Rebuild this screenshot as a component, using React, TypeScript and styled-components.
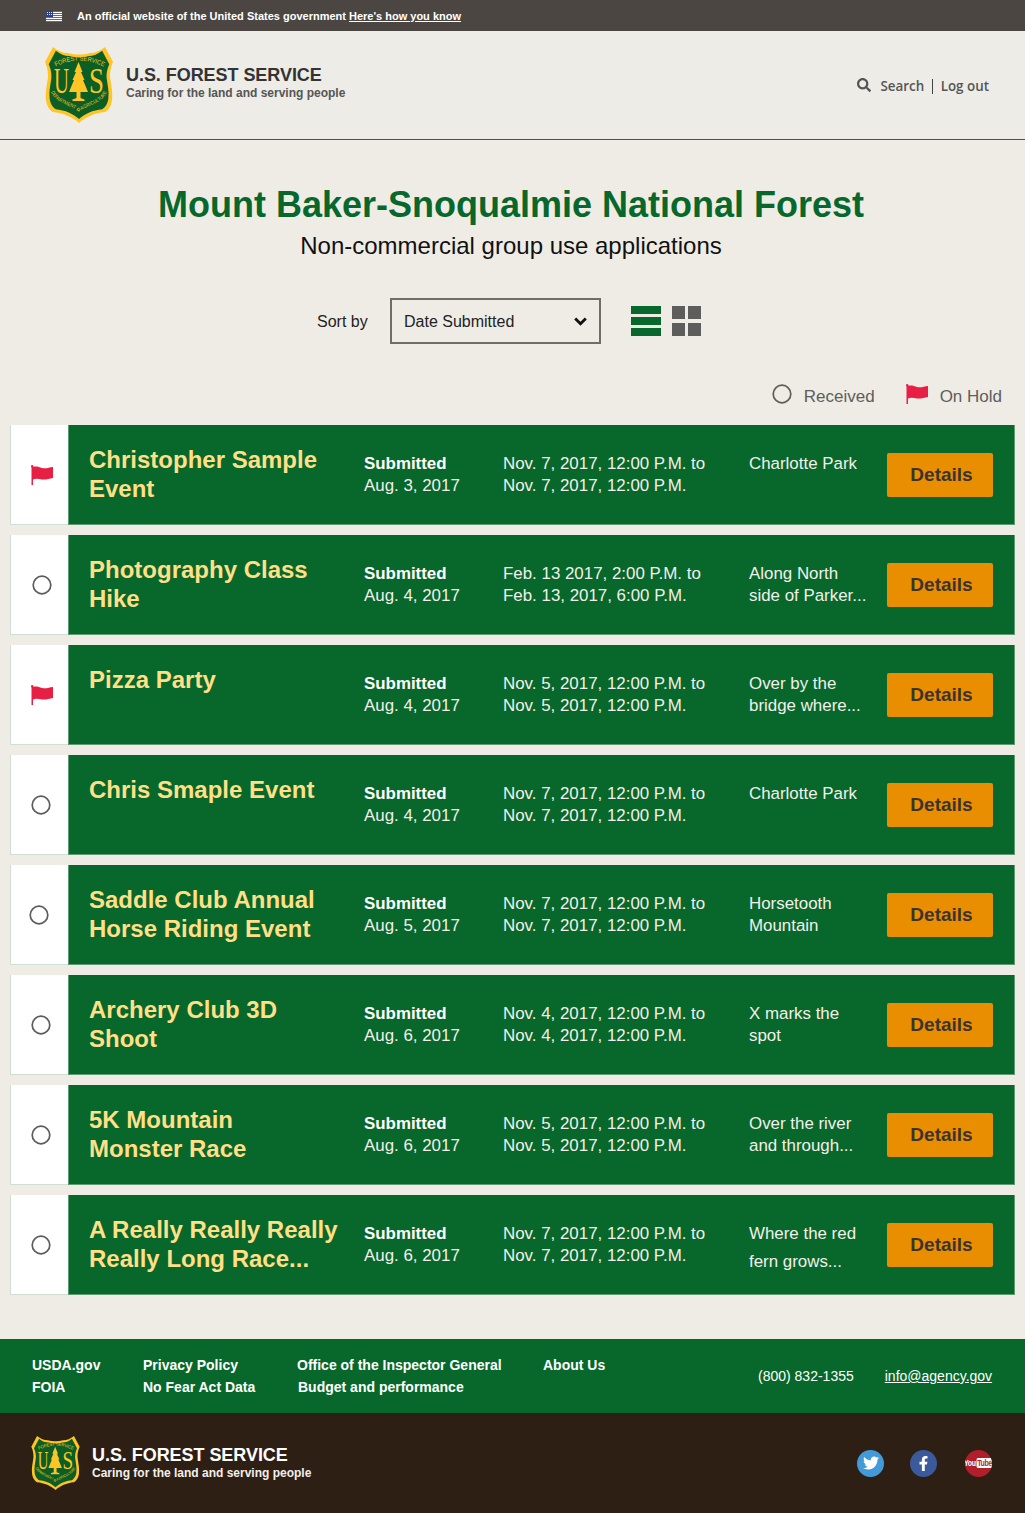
import React from "react";
import styled, { createGlobalStyle } from "styled-components";
import { FaTwitter, FaFacebookF, FaSearch } from "react-icons/fa";

const Global = createGlobalStyle`
  html, body { margin: 0; padding: 0; background: #efece6; }
  body { font-family: "Liberation Sans", Arial, sans-serif; }
  * { box-sizing: border-box; }
  a { color: inherit; }
`;

const Page = styled.div`width: 1025px; height: 1513px; display: flex; flex-direction: column; background: #efece6;`;
const Banner = styled.div`height: 31px; background: #4c4642; color: #fff; display: flex; align-items: center; padding: 1px 0 0 46px; font-size: 11px; font-weight: 700;`;
const BannerText = styled.span`margin-left: 15px; a { text-decoration: underline; }`;
const Header = styled.header`height: 109px; background: #eeece6; border-bottom: 1px solid #1f6b3a; display: flex; align-items: flex-start; justify-content: space-between; padding: 16px 36px 0 45px;`;
const Brand = styled.div<{ $gap: number }>`display: flex; align-items: center; gap: ${p => p.$gap}px;`;
const BrandText = styled.div<{ $up?: number }>`display: flex; flex-direction: column; margin-bottom: ${p => p.$up ?? 0}px;`;
const BrandTitle = styled.div<{ $light?: boolean }>`font-size: 18px; line-height: 20px; font-weight: 700; letter-spacing: -.05px; color: ${p => p.$light ? "#fff" : "#333"};`;
const BrandSub = styled.div<{ $light?: boolean }>`font-size: 12px; line-height: 16px; font-weight: 700; color: ${p => p.$light ? "#f2efe9" : "#555"};`;
const HeaderLinks = styled.nav`display: flex; align-items: center; margin-top: 30px; font-family: "Open Sans", sans-serif; font-size: 13.4px; font-weight: 600; color: #555; svg { margin-right: 9px; margin-top: -3px; }`;
const Divider = styled.span`width: 1px; height: 15px; background: #444; margin: 0 8px 0 7.5px;`;

const Main = styled.main`flex: 1; display: flex; flex-direction: column; padding-top: 44px;`;
const Title = styled.h1`margin: 0; text-align: center; font-size: 36px; line-height: 42px; font-weight: 700; color: #08672a; padding-right: 3px;`;
const Subtitle = styled.p`margin: 0; text-align: center; font-size: 24px; line-height: 40px; color: #111; padding-right: 3px;`;
const SortBar = styled.div`display: flex; align-items: center; margin: 32px 0 0 317px; height: 46px;`;
const SortLabel = styled.label`font-size: 16px; color: #222; width: 73px; padding-top: 1px;`;
const SelectWrap = styled.div`position: relative; width: 211px; height: 46px;`;
const Select = styled.select`appearance: none; width: 100%; height: 100%; border: 2px solid #6e6d68; border-radius: 0; background: transparent; padding: 0 0 0 12px; font: 16px "Liberation Sans", Arial, sans-serif; color: #222;`;
const Chevron = styled.svg`position: absolute; right: 14px; top: 19px; pointer-events: none;`;
const ViewIcons = styled.div`display: flex; gap: 11px; margin-left: 30px;`;
const Legend = styled.div`display: flex; justify-content: flex-end; align-items: center; margin-top: 37px; padding-right: 23px; height: 32px; font-size: 17px; color: #5d5d5d;`;
const LegendItem = styled.span<{ $gap: number; $mr?: number }>`display: flex; align-items: center; gap: ${p => p.$gap}px; margin-right: ${p => p.$mr ?? 0}px; svg { margin-bottom: 6px; }`;
const List = styled.div`display: flex; flex-direction: column; gap: 10px; margin: 12px 10px 0;`;
const Row = styled.article`display: grid; grid-template-columns: 58px 1fr; height: 100px;`;
const Status = styled.div<{ $shift: number }>`background: #fff; border: 1px solid #cfe0d3; border-right: 0; border-top: 0; display: flex; align-items: center; padding-left: ${p => p.$shift}px;`;
const Content = styled.div`background: #08672a; border-bottom: 1px solid #5e9a72; border-right: 1px solid #5e9a72; display: grid; grid-template-columns: 275px 139px 246px 138px 106px; padding: 20px 0 0 20px; border-left: 1px solid #5e9a72;`;
const EventName = styled.h2`margin: 0; font-size: 24px; line-height: 29px; font-weight: 700; color: #ffdf87; white-space: pre-line;`;
const Cell = styled.div<{ $lh?: number }>`font-size: 16.9px; line-height: ${p => p.$lh ?? 21.5}px; color: #f2f0ea; padding-top: ${p => p.$lh ? 5 : 8}px; white-space: pre-line;`;
const Strong = styled.strong`display: block; color: #fff;`;
const DetailsButton = styled.button`height: 44px; width: 106px; margin-top: 8px; padding: 0 0 0 3px; background: #e88e00; border: 0; border-radius: 2px; font: 700 19px "Liberation Sans", Arial, sans-serif; color: #3b3330;`;

const FooterLinks = styled.div`height: 74px; background: #08672a; color: #fff; display: flex; align-items: flex-start; padding: 15px 0 0 32px; font-size: 14px; font-weight: 700; line-height: 22px;`;
const LinkCol = styled.div<{ $w: number }>`width: ${p => p.$w}px; white-space: nowrap;`;
const LinkLine = styled.div<{ $indent?: number }>`padding-left: ${p => p.$indent ?? 0}px;`;
const Contact = styled.div`font-weight: 400; display: flex; gap: 31px; margin: 11px 0 0 91px; font-size: 14px; a { text-decoration: underline; }`;
const FooterBottom = styled.div`height: 100px; background: #2e1f14; display: flex; align-items: center; justify-content: space-between; padding: 0 33px 0 31px;`;
const Socials = styled.div`display: flex; gap: 26px; margin-bottom: 0;`;
const Social = styled.span<{ $bg: string; $ml?: number }>`width: 27px; height: 27px; flex: none; border-radius: 50%; overflow: hidden; background: ${p => p.$bg}; color: #fff; display: flex; align-items: center; justify-content: center; margin-left: ${p => p.$ml ?? 0}px;`;
const YouTube = styled.span`font: 700 9px "Liberation Sans", sans-serif; letter-spacing: -.5px; display: flex; align-items: center; flex: none; transform: scaleX(.78);`;
const Tube = styled.span`background: #fff; color: #b11f2a; border-radius: 2px; padding: 0 1px; margin-left: 1px;`;

const SHIELD = "M8 0 C13 4 18 6 23 6 C30 8 38 8 45 6 C50 6 55 4 60 0 L68 15 C65 22 65 26 65 30 C66 38 68 45 67 53 C66 60 63 63 60 65 C50 66 40 70 34 76 C28 70 18 66 8 65 C5 63 2 60 1 53 C0 45 2 38 3 30 C3 26 3 22 0 15 Z";

const Shield = ({ w, h, id }: { w: number; h: number; id: string }) => (
  <svg width={w} height={h} viewBox="0 0 68 76" aria-label="Forest Service shield">
    <path d={SHIELD} fill="#ffc425" />
    <path d={SHIELD} fill="#0b5e24" transform="translate(34 37) scale(.89 .9) translate(-34 -37)" />
    <defs>
      <path id={`${id}-top`} d="M8 21 Q34 6 61 21" />
      <path id={`${id}-bottom`} d="M5 42 C9 57 25 57 34 65 C43 57 59 57 63 42" />
    </defs>
    <text fontFamily="Liberation Sans, sans-serif" fontSize="6.400" fill="#ffc425">
      <textPath href={`#${id}-top`} startOffset="3" textLength="50" lengthAdjust="spacingAndGlyphs">FOREST SERVICE</textPath>
    </text>
    <text fontFamily="Liberation Sans, sans-serif" fontSize="5" fill="#ffc425">
      <textPath href={`#${id}-bottom`} startOffset="3" textLength="70" lengthAdjust="spacingAndGlyphs">DEPARTMENT OF AGRICULTURE</textPath>
    </text>
    <text x="9" y="46" fontFamily="Liberation Serif, serif" fontSize="36" textLength="15" lengthAdjust="spacingAndGlyphs" fill="#ffc425">U</text>
    <text x="44" y="46" fontFamily="Liberation Serif, serif" fontSize="36" textLength="15" lengthAdjust="spacingAndGlyphs" fill="#ffc425">S</text>
    <path d="M33.500 15 L37.500 25 L36 25 L39.500 33 L38 33 L43 45 L35.500 45 L35.500 51 L39.500 52.500 L39.500 54 L27.500 54 L27.500 52.500 L31.500 51 L31.500 45 L24 45 L29 33 L27.500 33 L31 25 L29.500 25 Z" fill="#ffc425" />
  </svg>
);

const Flag = ({ w = 22, h = 20 }: { w?: number; h?: number }) => (
  <svg width={w} height={h} viewBox="0 0 22 20" aria-hidden="true">
    <rect x="0.500" y="1" width="1.500" height="19" fill="#e81f45" />
    <circle cx="1.200" cy="1.200" r="1.200" fill="#e81f45" />
    <path d="M2 2 C5 1 8 2 11 3 C15 4 18 2.500 22 2 L22 13 C18 13.500 15 15 11 14.500 C8 14 5 13 2 14.500 Z" fill="#e81f45" />
  </svg>
);
const Ring = ({ size = 20 }: { size?: number }) => (
  <svg width={size} height={size} viewBox="0 0 20 20" aria-hidden="true">
    <circle cx="10" cy="10" r="8.800" fill="none" stroke="#5d5d5d" strokeWidth="1.700" />
  </svg>
);

const rows = [
  { name: "Christopher Sample\nEvent", sub: "Aug. 3, 2017", d: "Nov. 7, 2017, 12:00 P.M. to\nNov. 7, 2017, 12:00 P.M.", loc: "Charlotte Park", flag: true, shift: 20 },
  { name: "Photography Class\nHike", sub: "Aug. 4, 2017", d: "Feb. 13 2017, 2:00 P.M. to\nFeb. 13, 2017, 6:00 P.M.", loc: "Along North\nside of Parker...", shift: 21 },
  { name: "Pizza Party", sub: "Aug. 4, 2017", d: "Nov. 5, 2017, 12:00 P.M. to\nNov. 5, 2017, 12:00 P.M.", loc: "Over by the\nbridge where...", flag: true, shift: 20 },
  { name: "Chris Smaple Event", sub: "Aug. 4, 2017", d: "Nov. 7, 2017, 12:00 P.M. to\nNov. 7, 2017, 12:00 P.M.", loc: "Charlotte Park", shift: 20 },
  { name: "Saddle Club Annual\nHorse Riding Event", sub: "Aug. 5, 2017", d: "Nov. 7, 2017, 12:00 P.M. to\nNov. 7, 2017, 12:00 P.M.", loc: "Horsetooth\nMountain", shift: 18 },
  { name: "Archery Club 3D\nShoot", sub: "Aug. 6, 2017", d: "Nov. 4, 2017, 12:00 P.M. to\nNov. 4, 2017, 12:00 P.M.", loc: "X marks the\nspot", shift: 20 },
  { name: "5K Mountain\nMonster Race", sub: "Aug. 6, 2017", d: "Nov. 5, 2017, 12:00 P.M. to\nNov. 5, 2017, 12:00 P.M.", loc: "Over the river\nand through...", shift: 20 },
  { name: "A Really Really Really\nReally Long Race...", sub: "Aug. 6, 2017", d: "Nov. 7, 2017, 12:00 P.M. to\nNov. 7, 2017, 12:00 P.M.", loc: "Where the red\nfern grows...", shift: 20, locLh: 28 },
];

export default function App() {
  return (
    <Page>
      <Global />
      <Banner>
        <svg width="16" height="11" viewBox="0 0 16 11" aria-hidden="true">
          <rect width="16" height="11" fill="#fff" />
          {[0, 2, 4, 6, 8, 10].map(y => <rect key={y} y={y} width="16" height="1" fill="#e0393e" />)}
          <rect width="7" height="6" fill="#2b3f8c" />
          {[1, 3, 5].map(x => [1, 3].map(y => <rect key={`${x}-${y}`} x={x} y={y} width="1" height="1" fill="#dfe3f2" />))}
        </svg>
        <BannerText>An official website of the United States government <a href="#">Here's how you know</a></BannerText>
      </Banner>
      <Header>
        <Brand $gap={13}>
          <Shield w={68} h={76} id="top" />
          <BrandText $up={5}>
            <BrandTitle>U.S. FOREST SERVICE</BrandTitle>
            <BrandSub>Caring for the land and serving people</BrandSub>
          </BrandText>
        </Brand>
        <HeaderLinks>
          <FaSearch size={14} />
          <span>Search</span>
          <Divider />
          <span>Log out</span>
        </HeaderLinks>
      </Header>
      <Main>
        <Title>Mount Baker-Snoqualmie National Forest</Title>
        <Subtitle>Non-commercial group use applications</Subtitle>
        <SortBar>
          <SortLabel>Sort by</SortLabel>
          <SelectWrap>
            <Select defaultValue="Date Submitted"><option>Date Submitted</option></Select>
            <Chevron width="13" height="9" viewBox="0 0 13 9" aria-hidden="true">
              <path d="M1.200 1.500 L6.500 6.800 L11.800 1.500" fill="none" stroke="#111" strokeWidth="2.800" />
            </Chevron>
          </SelectWrap>
          <ViewIcons>
            <svg width="30" height="30" viewBox="0 0 30 30" aria-label="List view">
              <rect width="30" height="8" fill="#08672a" />
              <rect y="11" width="30" height="8" fill="#08672a" />
              <rect y="22" width="30" height="8" fill="#08672a" />
            </svg>
            <svg width="29" height="30" viewBox="0 0 29 30" aria-label="Grid view">
              <rect width="13" height="13" fill="#5d5d5d" />
              <rect x="16" width="13" height="13" fill="#5d5d5d" />
              <rect y="17" width="13" height="13" fill="#5d5d5d" />
              <rect x="16" y="17" width="13" height="13" fill="#5d5d5d" />
            </svg>
          </ViewIcons>
        </SortBar>
        <Legend>
          <LegendItem $gap={12} $mr={31}><Ring />Received</LegendItem>
          <LegendItem $gap={12}><Flag />On Hold</LegendItem>
        </Legend>
        <List>
          {rows.map(r => (
            <Row key={r.name}>
              <Status $shift={r.shift}>{r.flag ? <Flag /> : <Ring />}</Status>
              <Content>
                <EventName>{r.name}</EventName>
                <Cell><Strong>Submitted</Strong>{r.sub}</Cell>
                <Cell>{r.d}</Cell>
                <Cell $lh={r.locLh}>{r.loc}</Cell>
                <DetailsButton>Details</DetailsButton>
              </Content>
            </Row>
          ))}
        </List>
      </Main>
      <FooterLinks>
        <LinkCol $w={111}><LinkLine>USDA.gov</LinkLine><LinkLine>FOIA</LinkLine></LinkCol>
        <LinkCol $w={154}><LinkLine>Privacy Policy</LinkLine><LinkLine>No Fear Act Data</LinkLine></LinkCol>
        <LinkCol $w={246}><LinkLine>Office of the Inspector General</LinkLine><LinkLine $indent={1}>Budget and performance</LinkLine></LinkCol>
        <LinkCol $w={124}><LinkLine>About Us</LinkLine></LinkCol>
        <Contact><span>(800) 832-1355</span><a href="#">info@agency.gov</a></Contact>
      </FooterLinks>
      <FooterBottom>
        <Brand $gap={12}>
          <Shield w={49} h={54} id="foot" />
          <BrandText>
            <BrandTitle $light>U.S. FOREST SERVICE</BrandTitle>
            <BrandSub $light>Caring for the land and serving people</BrandSub>
          </BrandText>
        </Brand>
        <Socials>
          <Social $bg="#429bd8"><FaTwitter size={16} /></Social>
          <Social $bg="#3a5a9b"><FaFacebookF size={15} /></Social>
          <Social $bg="#b11f2a" $ml={2}><YouTube>You<Tube>Tube</Tube></YouTube></Social>
        </Socials>
      </FooterBottom>
    </Page>
  );
}
